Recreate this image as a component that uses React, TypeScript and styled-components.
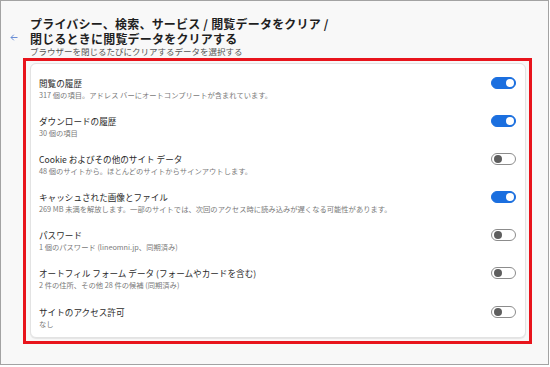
import styled, { createGlobalStyle } from 'styled-components'

const GlobalStyle = createGlobalStyle`
  html, body {
    margin: 0;
    padding: 0;
    background: #ffffff;
  }
  body {
    font-family: "Noto Sans CJK JP", "Noto Sans", sans-serif;
  }
`

const Frame = styled.div`
  box-sizing: border-box;
  width: 549px;
  height: 365px;
  border: 1px solid #a3a3a3;
  background: #f8f8f8;
  padding: 15px 0 0 9px;
`

const Header = styled.header`
  display: flex;
  align-items: flex-start;
`

const BackButton = styled.div`
  width: 20px;
  margin-top: 18px;
  display: flex;
  color: #6a8ed6;
`

const TitleBlock = styled.div`
  display: flex;
  flex-direction: column;
`

const Title = styled.h1`
  margin: 0;
  font-size: 12px;
  letter-spacing: 0.2px;
  line-height: 15px;
  font-weight: 700;
  color: #1f1f1f;
`

const Subtitle = styled.p`
  margin: 0;
  font-size: 8.5px;
  line-height: 11px;
  color: #555555;
`

const Highlight = styled.div`
  box-sizing: border-box;
  width: 509px;
  margin: 1px 0 0 13px;
  border: 3px solid #e8141c;
  padding: 2px 3px 3px 4px;
`

const Card = styled.section`
  background: #ffffff;
  border: 1px solid #e3e3e3;
  border-radius: 6px;
  box-shadow: 0 1px 1px rgba(0, 0, 0, 0.08);
  padding: 5px 9px 1px 8px;
`

const Row = styled.div`
  height: 38.2px;
  display: flex;
  align-items: flex-start;
  justify-content: space-between;
  box-sizing: border-box;
  padding-top: 7.5px;
`

const RowText = styled.div`
  display: flex;
  flex-direction: column;
`

const RowTitle = styled.div`
  font-size: 8.6px;
  line-height: 12px;
  color: #2b2b2b;
`

const RowDesc = styled.div`
  font-size: 7.3px;
  line-height: 12px;
  color: #7a7a7a;
`

const Toggle = styled.div<{ $on: boolean }>`
  box-sizing: border-box;
  width: 25px;
  height: 12px;
  margin-top: 0px;
  border-radius: 6px;
  border: 1px solid ${(p) => (p.$on ? '#1b6fdf' : '#8c8c8c')};
  background: ${(p) => (p.$on ? '#1b6fdf' : '#ffffff')};
  display: flex;
  align-items: center;
  justify-content: ${(p) => (p.$on ? 'flex-end' : 'flex-start')};
  padding: 0 1.5px;
`

const Knob = styled.div<{ $on: boolean }>`
  width: 8px;
  height: 8px;
  border-radius: 50%;
  background: ${(p) => (p.$on ? '#ffffff' : '#5e5e5e')};
`

const items = [
  { title: '閲覧の履歴', desc: '317 個の項目。アドレス バーにオートコンプリートが含まれています。', on: true },
  { title: 'ダウンロードの履歴', desc: '30 個の項目', on: true },
  { title: 'Cookie およびその他のサイト データ', desc: '48 個のサイトから。ほとんどのサイトからサインアウトします。', on: false },
  {
    title: 'キャッシュされた画像とファイル',
    desc: '269 MB 未満を解放します。一部のサイトでは、次回のアクセス時に読み込みが遅くなる可能性があります。',
    on: true,
  },
  { title: 'パスワード', desc: '1 個のパスワード (lineomni.jp、同期済み)', on: false },
  { title: 'オートフィル フォーム データ (フォームやカードを含む)', desc: '2 件の住所、その他 28 件の候補 (同期済み)', on: false },
  { title: 'サイトのアクセス許可', desc: 'なし', on: false },
]

export default function App() {
  return (
    <>
      <GlobalStyle />
      <Frame>
        <Header>
          <BackButton>
            <svg width="8" height="7" viewBox="0 0 8 7" fill="none" stroke="currentColor" strokeWidth="1">
              <path d="M7.5 3.5H1M3.8 0.7L1 3.5l2.8 2.8" />
            </svg>
          </BackButton>
          <TitleBlock>
            <Title>
              プライバシー、検索、サービス / 閲覧データをクリア /
              <br />
              閉じるときに閲覧データをクリアする
            </Title>
            <Subtitle>ブラウザーを閉じるたびにクリアするデータを選択する</Subtitle>
          </TitleBlock>
        </Header>
        <Highlight>
          <Card>
            {items.map((item) => (
              <Row key={item.title}>
                <RowText>
                  <RowTitle>{item.title}</RowTitle>
                  <RowDesc>{item.desc}</RowDesc>
                </RowText>
                <Toggle $on={item.on}>
                  <Knob $on={item.on} />
                </Toggle>
              </Row>
            ))}
          </Card>
        </Highlight>
      </Frame>
    </>
  )
}
